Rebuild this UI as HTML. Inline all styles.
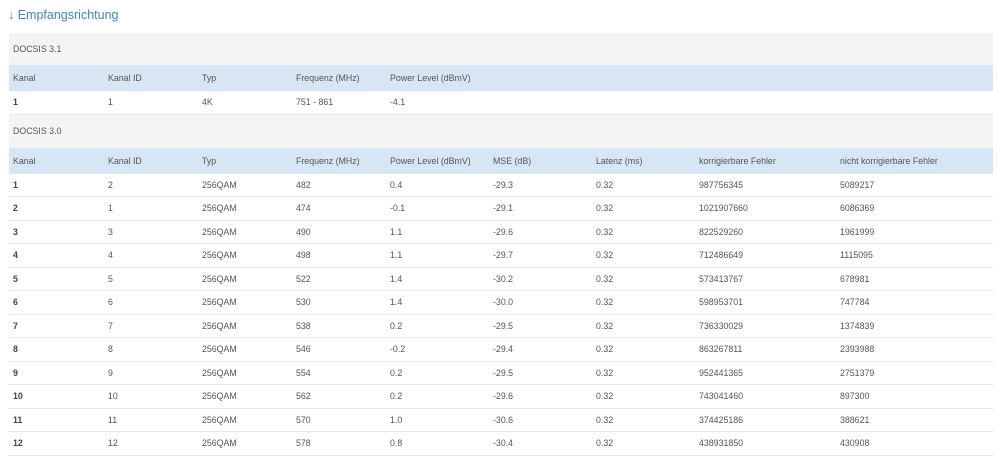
<!DOCTYPE html>
<html><head><meta charset="utf-8"><style>
body{margin:0;background:#fff;font-family:"Liberation Sans",sans-serif;width:998px;height:457px;overflow:hidden}
h2{position:absolute;left:8px;top:8px;margin:0;font-size:12.5px;font-weight:normal;color:#3f86c0}
table{position:absolute;left:9px;top:33px;width:984px;border-collapse:collapse;font-size:8.8px;color:#555;table-layout:fixed}
td{padding:0 0 0 4px;white-space:nowrap}
tr.sec td{background:#f4f4f2;height:32px}
tr.sec2 td{height:33px}
tr.hd td{background:#d6e6f4;height:26px}
tr.r td{height:22.5px;border-bottom:1px solid #e8e8e8}
tr.r td:first-child{font-weight:bold;color:#444}
</style></head><body>
<h2>↓ Empfangsrichtung</h2>
<table>
<colgroup><col style="width:95px"><col style="width:94px"><col style="width:94px"><col style="width:94px"><col style="width:103px"><col style="width:103px"><col style="width:103px"><col style="width:141px"><col style="width:157px"></colgroup>
<tr class="sec"><td colspan="9">DOCSIS 3.1</td></tr>
<tr class="hd"><td>Kanal</td><td>Kanal ID</td><td>Typ</td><td>Frequenz (MHz)</td><td>Power Level (dBmV)</td><td></td><td></td><td></td><td></td></tr>
<tr class="r"><td>1</td><td>1</td><td>4K</td><td>751 - 861</td><td>-4.1</td><td></td><td></td><td></td><td></td></tr>
<tr class="sec sec2"><td colspan="9">DOCSIS 3.0</td></tr>
<tr class="hd"><td>Kanal</td><td>Kanal ID</td><td>Typ</td><td>Frequenz (MHz)</td><td>Power Level (dBmV)</td><td>MSE (dB)</td><td>Latenz (ms)</td><td>korrigierbare Fehler</td><td>nicht korrigierbare Fehler</td></tr>
<tr class="r"><td>1</td><td>2</td><td>256QAM</td><td>482</td><td>0.4</td><td>-29.3</td><td>0.32</td><td>987756345</td><td>5089217</td></tr>
<tr class="r"><td>2</td><td>1</td><td>256QAM</td><td>474</td><td>-0.1</td><td>-29.1</td><td>0.32</td><td>1021907660</td><td>6086369</td></tr>
<tr class="r"><td>3</td><td>3</td><td>256QAM</td><td>490</td><td>1.1</td><td>-29.6</td><td>0.32</td><td>822529260</td><td>1961999</td></tr>
<tr class="r"><td>4</td><td>4</td><td>256QAM</td><td>498</td><td>1.1</td><td>-29.7</td><td>0.32</td><td>712486649</td><td>1115095</td></tr>
<tr class="r"><td>5</td><td>5</td><td>256QAM</td><td>522</td><td>1.4</td><td>-30.2</td><td>0.32</td><td>573413767</td><td>678981</td></tr>
<tr class="r"><td>6</td><td>6</td><td>256QAM</td><td>530</td><td>1.4</td><td>-30.0</td><td>0.32</td><td>598953701</td><td>747784</td></tr>
<tr class="r"><td>7</td><td>7</td><td>256QAM</td><td>538</td><td>0.2</td><td>-29.5</td><td>0.32</td><td>736330029</td><td>1374839</td></tr>
<tr class="r"><td>8</td><td>8</td><td>256QAM</td><td>546</td><td>-0.2</td><td>-29.4</td><td>0.32</td><td>863267811</td><td>2393988</td></tr>
<tr class="r"><td>9</td><td>9</td><td>256QAM</td><td>554</td><td>0.2</td><td>-29.5</td><td>0.32</td><td>952441365</td><td>2751379</td></tr>
<tr class="r"><td>10</td><td>10</td><td>256QAM</td><td>562</td><td>0.2</td><td>-29.6</td><td>0.32</td><td>743041460</td><td>897300</td></tr>
<tr class="r"><td>11</td><td>11</td><td>256QAM</td><td>570</td><td>1.0</td><td>-30.6</td><td>0.32</td><td>374425186</td><td>388621</td></tr>
<tr class="r"><td>12</td><td>12</td><td>256QAM</td><td>578</td><td>0.8</td><td>-30.4</td><td>0.32</td><td>438931850</td><td>430908</td></tr>
</table>
</body></html>
